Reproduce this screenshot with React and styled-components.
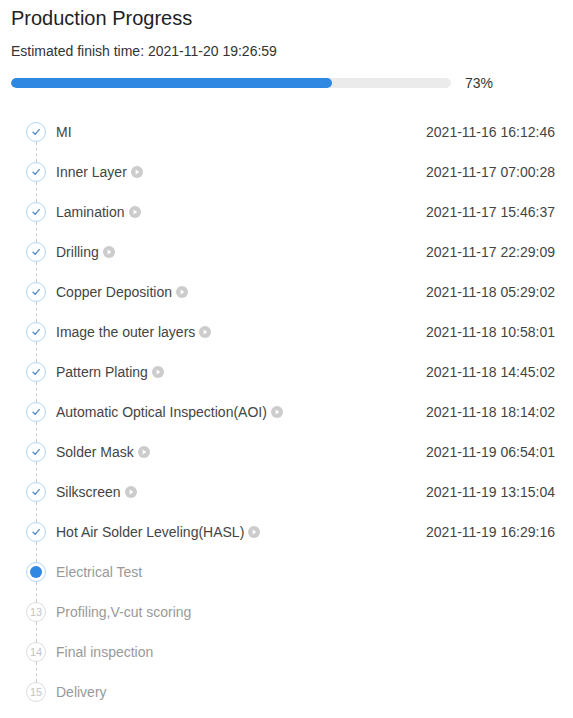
import styled, { createGlobalStyle } from 'styled-components';

const GlobalStyle = createGlobalStyle`
    body {
        margin: 0;
        background: #fff;
        font-family: 'Liberation Sans', Arial, sans-serif;
        color: #333;
    }
`;

const Page = styled.div`
    padding: 6px 18px 0 11px;
`;

const Title = styled.h2`
    margin: 0;
    font-size: 20px;
    font-weight: normal;
    line-height: 24px;
    color: #222;
`;

const Estimate = styled.p`
    margin: 12px 0 0;
    font-size: 14px;
    line-height: 18px;
`;

const ProgressRow = styled.div`
    display: flex;
    align-items: center;
    gap: 14px;
    margin-top: 15px;
`;

const Track = styled.div`
    width: 440px;
    height: 10px;
    border-radius: 5px;
    background: #ebebeb;
    overflow: hidden;
`;

const Fill = styled.div`
    height: 100%;
    border-radius: 5px;
    background: #2f88e1;
`;

const Percent = styled.span`
    font-size: 14px;
`;

const Steps = styled.ul`
    list-style: none;
    margin: 21px 0 0;
    padding: 0 0 0 15px;
`;

const Step = styled.li`
    position: relative;
    display: flex;
    align-items: center;
    height: 40px;
    font-size: 14px;
    color: ${({ $pending }) => ($pending ? '#999' : '#444')};

    &:not(:last-child)::after {
        content: '';
        position: absolute;
        left: 10px;
        top: 30px;
        height: 20px;
        border-left: 1px dashed #ccc;
    }
`;

const Marker = styled.span`
    box-sizing: border-box;
    flex: none;
    width: 20px;
    height: 20px;
    margin-right: 10px;
    border-radius: 50%;
    border: 1px solid ${({ $state }) => ($state === 'todo' ? '#ddd' : '#b0d6f3')};
    display: flex;
    align-items: center;
    justify-content: center;
    font-size: 11px;
    color: #c4c4c4;
`;

const Dot = styled.span`
    width: 12px;
    height: 12px;
    border-radius: 50%;
    background: #2f88e1;
`;

const Label = styled.span`
    flex: 1;
    display: flex;
    align-items: center;
    gap: 4px;
`;

const Time = styled.span`
    color: #444;
`;

const Check = () => (
    <svg width="10" height="10" viewBox="0 0 10 10">
        <path d="M2 5.2 L4.2 7.3 L8.2 2.6" fill="none" stroke="#4f86bf" strokeWidth="1.3" strokeLinecap="round" strokeLinejoin="round" />
    </svg>
);

const Play = () => (
    <svg width="12" height="12" viewBox="0 0 12 12">
        <circle cx="6" cy="6" r="6" fill="#ccc" />
        <path d="M4.6 3.6 L8.4 6 L4.6 8.4 Z" fill="#fff" />
    </svg>
);

const steps = [
    { name: 'MI', time: '2021-11-16 16:12:46' },
    { name: 'Inner Layer', time: '2021-11-17 07:00:28', more: true },
    { name: 'Lamination', time: '2021-11-17 15:46:37', more: true },
    { name: 'Drilling', time: '2021-11-17 22:29:09', more: true },
    { name: 'Copper Deposition', time: '2021-11-18 05:29:02', more: true },
    { name: 'Image the outer layers', time: '2021-11-18 10:58:01', more: true },
    { name: 'Pattern Plating', time: '2021-11-18 14:45:02', more: true },
    { name: 'Automatic Optical Inspection(AOI)', time: '2021-11-18 18:14:02', more: true },
    { name: 'Solder Mask', time: '2021-11-19 06:54:01', more: true },
    { name: 'Silkscreen', time: '2021-11-19 13:15:04', more: true },
    { name: 'Hot Air Solder Leveling(HASL)', time: '2021-11-19 16:29:16', more: true },
    { name: 'Electrical Test', current: true },
    { name: 'Profiling,V-cut scoring' },
    { name: 'Final inspection' },
    { name: 'Delivery' },
];

const App = () => {
    const percent = 73;
    return (
        <Page>
            <GlobalStyle />
            <Title>Production Progress</Title>
            <Estimate>Estimated finish time: 2021-11-20 19:26:59</Estimate>
            <ProgressRow>
                <Track>
                    <Fill style={{ width: `${percent}%` }} />
                </Track>
                <Percent>{percent}%</Percent>
            </ProgressRow>
            <Steps>
                {steps.map((s, i) => {
                    const state = s.time ? 'done' : s.current ? 'current' : 'todo';
                    return (
                        <Step key={s.name} $pending={!s.time}>
                            <Marker $state={state}>
                                {state === 'done' && <Check />}
                                {state === 'current' && <Dot />}
                                {state === 'todo' && i + 1}
                            </Marker>
                            <Label>
                                {s.name}
                                {s.more && <Play />}
                            </Label>
                            {s.time && <Time>{s.time}</Time>}
                        </Step>
                    );
                })}
            </Steps>
        </Page>
    );
};

export default App;
